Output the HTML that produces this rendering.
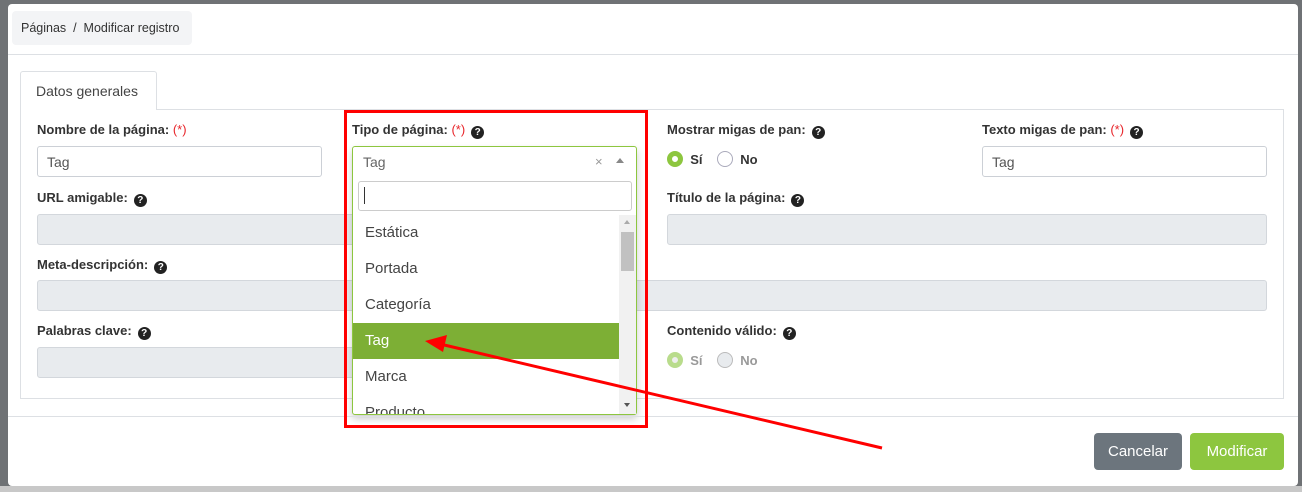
<!DOCTYPE html><html><head><style>
*{box-sizing:border-box;margin:0;padding:0}
body{width:1302px;height:492px;overflow:hidden;background:#6f7275;font-family:"Liberation Sans",sans-serif;font-size:14px;color:#333;position:relative}
.abs{position:absolute;white-space:nowrap}
.modal{left:8px;top:4px;width:1290px;height:482px;background:#fff;border-radius:4px}
.lbl{font-weight:bold;font-size:13px;color:#333}
.req{color:#e8262b;font-weight:normal}
.q{display:inline-block;width:13px;height:13px;border-radius:50%;background:#222;color:#fff;font-size:10px;text-align:center;line-height:13px;font-weight:bold;margin-left:6px;vertical-align:-1px}
.inp{border:1px solid #ccd0d6;border-radius:3px;height:31px;background:#fff;padding:7px 9px;font-size:14px;color:#555}
.dis{background:#e8ebee;border:1px solid #d3d7dc;border-radius:3px;height:31px}
.radio{display:inline-block;width:16px;height:16px;border-radius:50%;border:1px solid #aab;vertical-align:-3px}
.opt{position:absolute;left:353px;width:266px;height:36px;line-height:36px;padding-left:12px;font-size:15px;color:#444}
</style></head><body>
<div class="abs" style="left:0;top:486px;width:1302px;height:6px;background:#c8c8c8"></div>
<div class="abs modal"></div>
<div class="abs" style="left:12px;top:11px;width:180px;height:34px;background:#f3f4f6;border-radius:4px;padding:10px 9px;font-size:12.5px">Páginas &nbsp;/&nbsp; Modificar registro</div>
<div class="abs" style="left:8px;top:54px;width:1290px;height:1px;background:#dde0e4"></div>
<div class="abs" style="left:20px;top:109px;width:1264px;height:290px;border:1px solid #dde0e4"></div>
<div class="abs" style="left:20px;top:71px;width:137px;height:39px;border:1px solid #dde0e4;border-bottom:none;background:#fff;border-radius:3px 3px 0 0;padding:11px 15px;font-size:14px;color:#444">Datos generales</div>

<div class="abs lbl" style="left:37px;top:122px">Nombre de la página: <span class="req">(*)</span></div>
<div class="abs inp" style="left:37px;top:146px;width:285px">Tag</div>
<div class="abs lbl" style="left:37px;top:190px">URL amigable:<span class="q">?</span></div>
<div class="abs dis" style="left:37px;top:214px;width:600px"></div>
<div class="abs lbl" style="left:37px;top:257px">Meta-descripción:<span class="q">?</span></div>
<div class="abs dis" style="left:37px;top:280px;width:1230px"></div>
<div class="abs lbl" style="left:37px;top:323px">Palabras clave:<span class="q">?</span></div>
<div class="abs dis" style="left:37px;top:347px;width:600px"></div>

<div class="abs lbl" style="left:667px;top:190px">Título de la página:<span class="q">?</span></div>
<div class="abs dis" style="left:667px;top:214px;width:600px"></div>
<div class="abs lbl" style="left:667px;top:122px">Mostrar migas de pan:<span class="q">?</span></div>
<div class="abs lbl" style="left:667px;top:151px"><span class="radio" style="border:5px solid #8dc63f"></span>&nbsp; Sí &nbsp;&nbsp;&nbsp;<span class="radio"></span>&nbsp; No</div>
<div class="abs lbl" style="left:982px;top:122px">Texto migas de pan: <span class="req">(*)</span><span class="q">?</span></div>
<div class="abs inp" style="left:982px;top:146px;width:285px">Tag</div>
<div class="abs lbl" style="left:667px;top:323px">Contenido válido:<span class="q">?</span></div>
<div class="abs lbl" style="left:667px;top:352px;color:#999"><span class="radio" style="border:5px solid #b9dc8c;background:#eee"></span>&nbsp; Sí &nbsp;&nbsp;&nbsp;<span class="radio" style="background:#e8ebee;border-color:#bbb"></span>&nbsp; No</div>

<div class="abs lbl" style="left:352px;top:122px">Tipo de página: <span class="req">(*)</span><span class="q">?</span></div>
<div class="abs" style="left:352px;top:146px;width:285px;height:269px;border:1px solid #8dc63f;border-radius:3px;background:#fff;box-shadow:0 4px 8px rgba(0,0,0,.2)"></div>
<div class="abs" style="left:363px;top:154px;font-size:14px;color:#666">Tag</div>
<div class="abs" style="left:595px;top:154px;font-size:13px;color:#999">×</div>
<div class="abs" style="left:616px;top:158px;width:0;height:0;border-left:4px solid transparent;border-right:4px solid transparent;border-bottom:5px solid #888"></div>
<div class="abs" style="left:358px;top:181px;width:274px;height:30px;border:1px solid #ccc;border-radius:3px"></div>
<div class="abs" style="left:364px;top:187px;width:1px;height:17px;background:#333"></div>
<div class="opt" style="top:215px">Estática</div>
<div class="opt" style="top:251px">Portada</div>
<div class="opt" style="top:287px">Categoría</div>
<div class="opt" style="top:323px;background:#7daf35;color:#fff">Tag</div>
<div class="opt" style="top:359px">Marca</div>
<div class="opt" style="top:395px;height:19px;overflow:hidden">Producto</div>
<div class="abs" style="left:619px;top:215px;width:17px;height:199px;background:#f1f1f1"></div>
<div class="abs" style="left:621px;top:232px;width:13px;height:39px;background:#c1c1c1"></div>
<div class="abs" style="left:624px;top:220px;border-left:3px solid transparent;border-right:3px solid transparent;border-bottom:4px solid #aaa"></div>
<div class="abs" style="left:624px;top:403px;border-left:3px solid transparent;border-right:3px solid transparent;border-top:4px solid #555"></div>

<div class="abs" style="left:8px;top:416px;width:1290px;height:1px;background:#dde0e4"></div>
<div class="abs" style="left:1094px;top:433px;width:88px;height:37px;background:#6c757d;border-radius:4px;color:#fff;font-size:15px;text-align:center;line-height:37px">Cancelar</div>
<div class="abs" style="left:1190px;top:433px;width:94px;height:37px;background:#8dc63f;border-radius:4px;color:#fff;font-size:15px;text-align:center;line-height:37px">Modificar</div>

<div class="abs" style="left:344px;top:110px;width:304px;height:318px;border:3px solid #f00"></div>
<svg class="abs" style="left:0;top:0" width="1302" height="492"><line x1="882" y1="448" x2="440" y2="344" stroke="#f00" stroke-width="3"/><polygon points="425,341 447,335 443,352" fill="#f00"/></svg>
</body></html>
